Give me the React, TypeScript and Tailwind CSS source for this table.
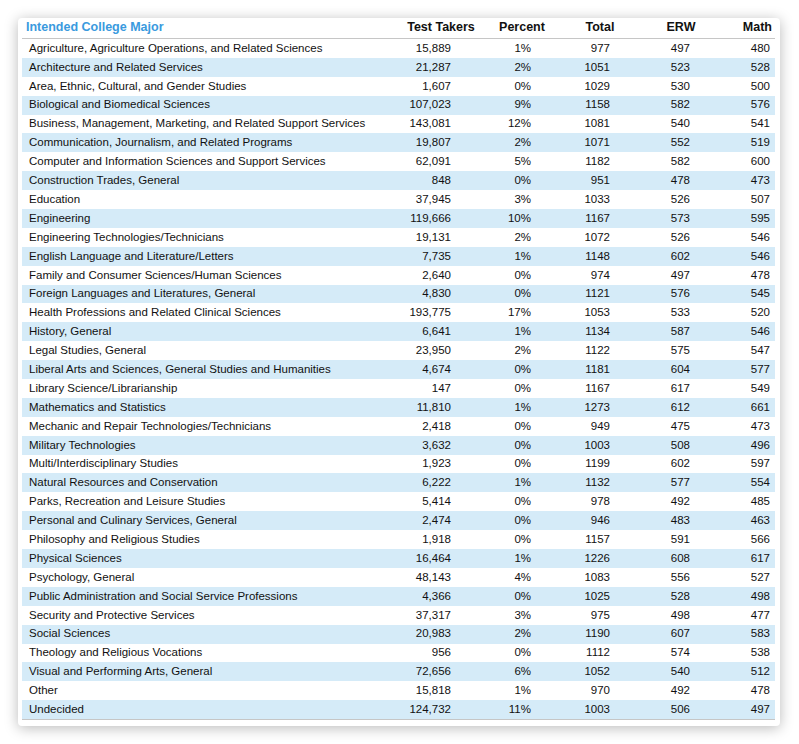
const rows: [string, string, string, string, string, string][] = [
  ['Agriculture, Agriculture Operations, and Related Sciences', '15,889', '1%', '977', '497', '480'],
  ['Architecture and Related Services', '21,287', '2%', '1051', '523', '528'],
  ['Area, Ethnic, Cultural, and Gender Studies', '1,607', '0%', '1029', '530', '500'],
  ['Biological and Biomedical Sciences', '107,023', '9%', '1158', '582', '576'],
  ['Business, Management, Marketing, and Related Support Services', '143,081', '12%', '1081', '540', '541'],
  ['Communication, Journalism, and Related Programs', '19,807', '2%', '1071', '552', '519'],
  ['Computer and Information Sciences and Support Services', '62,091', '5%', '1182', '582', '600'],
  ['Construction Trades, General', '848', '0%', '951', '478', '473'],
  ['Education', '37,945', '3%', '1033', '526', '507'],
  ['Engineering', '119,666', '10%', '1167', '573', '595'],
  ['Engineering Technologies/Technicians', '19,131', '2%', '1072', '526', '546'],
  ['English Language and Literature/Letters', '7,735', '1%', '1148', '602', '546'],
  ['Family and Consumer Sciences/Human Sciences', '2,640', '0%', '974', '497', '478'],
  ['Foreign Languages and Literatures, General', '4,830', '0%', '1121', '576', '545'],
  ['Health Professions and Related Clinical Sciences', '193,775', '17%', '1053', '533', '520'],
  ['History, General', '6,641', '1%', '1134', '587', '546'],
  ['Legal Studies, General', '23,950', '2%', '1122', '575', '547'],
  ['Liberal Arts and Sciences, General Studies and Humanities', '4,674', '0%', '1181', '604', '577'],
  ['Library Science/Librarianship', '147', '0%', '1167', '617', '549'],
  ['Mathematics and Statistics', '11,810', '1%', '1273', '612', '661'],
  ['Mechanic and Repair Technologies/Technicians', '2,418', '0%', '949', '475', '473'],
  ['Military Technologies', '3,632', '0%', '1003', '508', '496'],
  ['Multi/Interdisciplinary Studies', '1,923', '0%', '1199', '602', '597'],
  ['Natural Resources and Conservation', '6,222', '1%', '1132', '577', '554'],
  ['Parks, Recreation and Leisure Studies', '5,414', '0%', '978', '492', '485'],
  ['Personal and Culinary Services, General', '2,474', '0%', '946', '483', '463'],
  ['Philosophy and Religious Studies', '1,918', '0%', '1157', '591', '566'],
  ['Physical Sciences', '16,464', '1%', '1226', '608', '617'],
  ['Psychology, General', '48,143', '4%', '1083', '556', '527'],
  ['Public Administration and Social Service Professions', '4,366', '0%', '1025', '528', '498'],
  ['Security and Protective Services', '37,317', '3%', '975', '498', '477'],
  ['Social Sciences', '20,983', '2%', '1190', '607', '583'],
  ['Theology and Religious Vocations', '956', '0%', '1112', '574', '538'],
  ['Visual and Performing Arts, General', '72,656', '6%', '1052', '540', '512'],
  ['Other', '15,818', '1%', '970', '492', '478'],
  ['Undecided', '124,732', '11%', '1003', '506', '497'],
];

const grid = 'grid grid-cols-[378px_82px_80px_76px_86px_51px] items-center';

export default function App() {
  return (
    <div className="min-h-[744px] bg-white p-[18px] font-['Liberation_Sans',Arial,sans-serif] text-[#111]">
      <div className="w-[762px] rounded-[4px] bg-white pl-[4px] pr-[5px] pb-[6px] shadow-[0_2px_14px_rgba(0,0,0,0.28)]">
        <div className={`${grid} h-[21px] border-b-[1.5px] border-[#c6c6c6] pb-[1px] text-[12.5px] font-bold`}>
          <div className="pl-[4px] text-[#3a9ade]">Intended College Major</div>
          <div className="text-center">Test Takers</div>
          <div className="text-center">Percent</div>
          <div className="text-center">Total</div>
          <div className="text-center">ERW</div>
          <div className="pr-[3px] text-right">Math</div>
        </div>
        <div className="border-b border-[#c6c6c6] text-[11.5px]">
          {rows.map((r, i) => (
            <div key={r[0]} className={`${grid} h-[18.9px] ${i % 2 === 1 ? 'bg-[#d5ebf8]' : 'bg-white'}`}>
              <div className="whitespace-nowrap pl-[7px]">{r[0]}</div>
              <div className="pr-[31px] text-right">{r[1]}</div>
              <div className="pr-[31px] text-right">{r[2]}</div>
              <div className="pr-[28px] text-right">{r[3]}</div>
              <div className="pr-[34px] text-right">{r[4]}</div>
              <div className="pr-[5px] text-right">{r[5]}</div>
            </div>
          ))}
        </div>
      </div>
    </div>
  );
}
